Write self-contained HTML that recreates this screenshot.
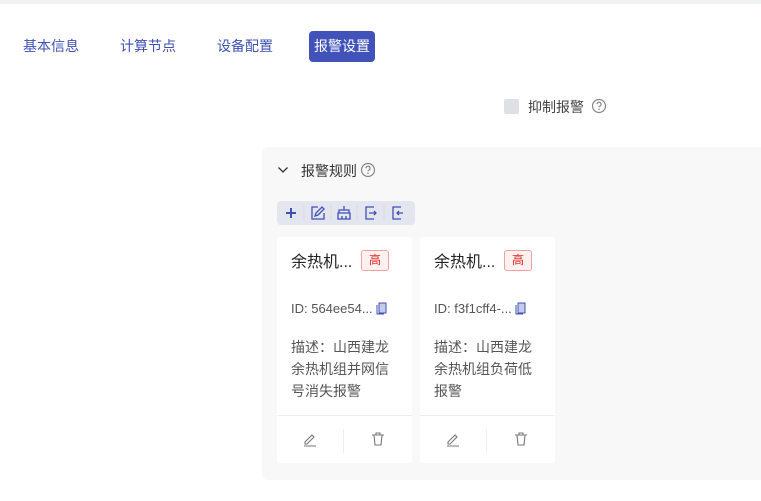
<!DOCTYPE html>
<html><head><meta charset="utf-8"><style>
*{margin:0;padding:0;box-sizing:border-box}
body{width:761px;height:501px;background:#fff;font-family:"Liberation Sans","Noto Sans CJK SC",sans-serif;position:relative;overflow:hidden;color:#333}
.abs{position:absolute}
.tab{position:absolute;top:31px;height:31px;line-height:31px;font-size:14px;color:#3f51b5}
.card{position:absolute;top:237px;width:135px;height:226px;background:#fff;border-radius:3px}
.t{position:absolute;left:14px;top:11px;font-size:16px;color:#222}
.tag{position:absolute;left:84px;top:13px;width:28px;height:21px;border:1px solid #f3a0a0;background:#fff1f0;color:#e02020;font-size:12px;text-align:center;line-height:19px;border-radius:3px}
.id{position:absolute;left:14px;top:64px;font-size:13px;color:#555}
.desc{position:absolute;left:14px;top:99px;width:101px;font-size:14px;line-height:22px;color:#555}
.hr{position:absolute;left:0;right:0;top:178px;border-top:1px solid #eee}
.vr{position:absolute;left:66px;top:192px;height:24px;border-left:1px solid #eee}
</style></head><body>
<div class="abs" style="left:0;top:0;width:761px;height:4px;background:#f0f2f5"></div>
<div class="tab" style="left:23px">基本信息</div>
<div class="tab" style="left:120px">计算节点</div>
<div class="tab" style="left:217px">设备配置</div>
<div class="tab" style="left:309px;width:66px;background:#4153b9;color:#fff;border-radius:4px;text-align:center">报警设置</div>
<div class="abs" style="left:504px;top:99px;width:15px;height:15px;background:#dde1e6;border-radius:2px"></div>
<div class="abs" style="left:528px;top:97px;font-size:14px;color:#444">抑制报警</div>
<svg class="abs" style="left:591px;top:98px" width="16" height="16" viewBox="0 0 16 16"><circle cx="8" cy="8" r="6.5" fill="none" stroke="#888" stroke-width="1.2"/><path d="M6 6.3a2 2 0 1 1 2.6 1.9c-.5.2-.6.5-.6 1.1" fill="none" stroke="#888" stroke-width="1.2"/><circle cx="8" cy="11.3" r=".8" fill="#888"/></svg>
<div class="abs" style="left:262px;top:147px;width:520px;height:333px;background:#f8f8f8;border-radius:6px"></div>
<svg class="abs" style="left:277px;top:165px" width="12" height="10" viewBox="0 0 12 10"><path d="M1.5 2.5l4.5 4.5 4.5-4.5" fill="none" stroke="#333" stroke-width="1.3"/></svg>
<div class="abs" style="left:301px;top:161px;font-size:14px;color:#333">报警规则</div>
<svg class="abs" style="left:360px;top:162px" width="16" height="16" viewBox="0 0 16 16"><circle cx="8" cy="8" r="6.5" fill="none" stroke="#888" stroke-width="1.2"/><path d="M6 6.3a2 2 0 1 1 2.6 1.9c-.5.2-.6.5-.6 1.1" fill="none" stroke="#888" stroke-width="1.2"/><circle cx="8" cy="11.3" r=".8" fill="#888"/></svg>
<div class="abs" style="left:277px;top:201px;width:138px;height:24px;background:#e4e6ef;border-radius:4px"></div>
<svg class="abs" style="left:277px;top:201px" width="138" height="24" viewBox="0 0 138 24" fill="none" stroke="#3f51b5" stroke-width="1.3">
<path d="M14 7v10M9 12h10" stroke-width="2"/>
<path d="M41 6h-6v12h12v-6M38 15l1-3 6-6 2 2-6 6z"/>
<path d="M67 5v4M62 9h10v3h-10zM61 12h12v6H61zM65 15v3M69 15v3"/>
<path d="M97 6h-8v12h8M92 12h7M97 10l2 2-2 2"/>
<path d="M124 6h-8v12h8M120 12h6M122 10l-2 2 2 2"/>
<path d="M27 4v16M54 4v16M80 4v16M107 4v16" stroke="#dadce6"/>
</svg>
<div class="card" style="left:277px">
<div class="t">余热机...</div><div class="tag">高</div>
<div class="id">ID: 564ee54... <svg width="11" height="13" viewBox="0 0 11 13" style="vertical-align:-2px"><rect x="3" y="1" width="7" height="10" fill="#c5cbe8" stroke="#3f51b5"/><path d="M1 3v9h7" fill="none" stroke="#3f51b5"/></svg></div>
<div class="desc">描述：山西建龙余热机组并网信号消失报警</div>
<div class="hr"></div><div class="vr"></div>
<svg class="abs" style="left:25px;top:194px" width="16" height="16" viewBox="0 0 16 16" fill="none" stroke="#777" stroke-width="1.1"><path d="M3 11l7-7 2 2-7 7H3zM2 15h12"/></svg>
<svg class="abs" style="left:93px;top:194px" width="16" height="16" viewBox="0 0 16 16" fill="none" stroke="#777" stroke-width="1.1"><path d="M2 4h12M6 4V2h4v2M4 4l1 10h6l1-10"/></svg>
</div>
<div class="card" style="left:420px">
<div class="t">余热机...</div><div class="tag">高</div>
<div class="id">ID: f3f1cff4-... <svg width="11" height="13" viewBox="0 0 11 13" style="vertical-align:-2px"><rect x="3" y="1" width="7" height="10" fill="#c5cbe8" stroke="#3f51b5"/><path d="M1 3v9h7" fill="none" stroke="#3f51b5"/></svg></div>
<div class="desc">描述：山西建龙余热机组负荷低报警</div>
<div class="hr"></div><div class="vr"></div>
<svg class="abs" style="left:25px;top:194px" width="16" height="16" viewBox="0 0 16 16" fill="none" stroke="#777" stroke-width="1.1"><path d="M3 11l7-7 2 2-7 7H3zM2 15h12"/></svg>
<svg class="abs" style="left:93px;top:194px" width="16" height="16" viewBox="0 0 16 16" fill="none" stroke="#777" stroke-width="1.1"><path d="M2 4h12M6 4V2h4v2M4 4l1 10h6l1-10"/></svg>
</div>
</body></html>
